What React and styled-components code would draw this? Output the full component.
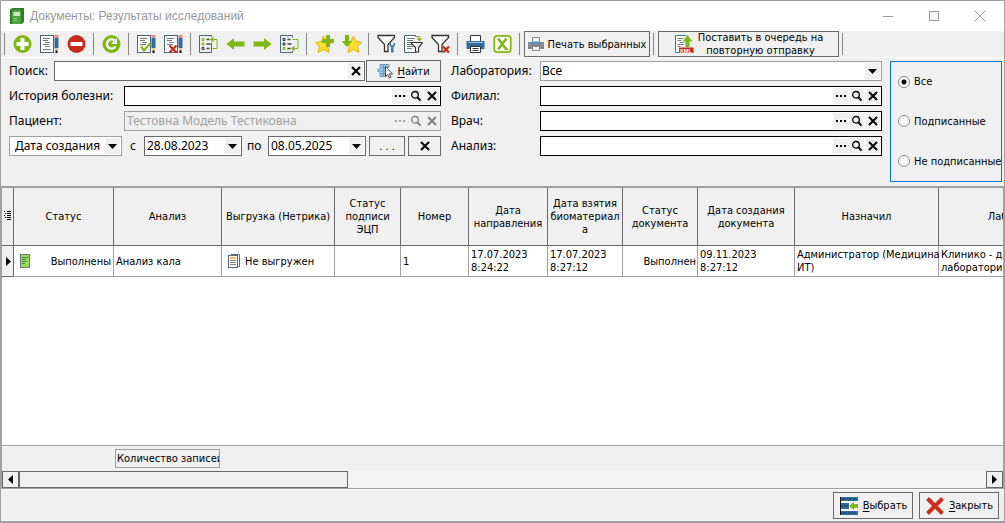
import React from "react";
import styled, { createGlobalStyle, css } from "styled-components";

const GlobalStyle = createGlobalStyle`
  *, *::before, *::after { box-sizing: border-box; }
  body {
    margin: 0;
    background: #f0f0f0;
    color: #000;
    font: 12px/16px "Noto Sans", "Open Sans", sans-serif;
  }
  button, input, select { font: inherit; color: inherit; margin: 0; }
  svg { flex: none; }
`;

const compactText = css`
  font-family: "DejaVu Sans Condensed", "DejaVu Sans", sans-serif;
  font-size: 11px;
  line-height: 13px;
`;

const Window = styled.div`
  display: flex;
  flex-direction: column;
  min-height: 100vh;
  border: 1px solid #a0a0a0;
  border-bottom-width: 2px;
  background: #f0f0f0;
`;

const TitleBar = styled.header`
  display: flex;
  align-items: center;
  height: 30px;
  padding: 0 12px 0 8px;
  background: #fff;
  color: #999;
`;

const Title = styled.h1`
  flex: 1;
  margin: 0 0 0 5px;
  font-family: "Liberation Sans", Arial, sans-serif;
  font-size: 12px;
  font-weight: 400;
`;

const WindowButtons = styled.div`
  display: flex;
  gap: 22px;
`;

const WindowButton = styled.button`
  display: grid;
  place-items: center;
  width: 24px;
  height: 24px;
  padding: 0;
  border: 0;
  background: none;
`;

const Toolbar = styled.div`
  display: flex;
  align-items: center;
  height: 27px;
  border-bottom: 1px solid #fff;
`;

const Separator = styled.i`
  width: 1px;
  height: 22px;
  margin: 0 4px 0 3px;
  background: #868686;
`;

const ToolButton = styled.button`
  display: grid;
  place-items: center;
  width: 27px;
  height: 26px;
  padding: 0;
  border: 0;
  background: none;
`;

const PushButton = styled.button`
  display: flex;
  align-items: center;
  justify-content: center;
  gap: 4px;
  width: ${(p) => p.$width}px;
  height: ${(p) => p.$height || 26}px;
  padding: 0;
  border: 1px solid #696969;
  background: #f0f0f0;
  white-space: nowrap;
  ${compactText}
  u { text-underline-offset: 2px; }
`;

const Filters = styled.form`
  display: flex;
  align-items: flex-start;
  height: 128px;
  padding: 3px 2px 0 8px;
`;

const FilterColumn = styled.div`
  display: flex;
  flex-direction: column;
  gap: 5px;
  flex: ${(p) => (p.$width ? `0 0 ${p.$width}px` : "1")};
  min-width: 0;
  margin-right: ${(p) => p.$after}px;
`;

const FilterRow = styled.div`
  display: flex;
  align-items: center;
  gap: ${(p) => p.$gap || 0}px;
  height: 20px;
`;

const DateActions = styled.div`
  display: flex;
  gap: 3px;
  margin-left: 3px;
`;

const Label = styled.label`
  flex: 0 0 ${(p) => p.$width}px;
  padding-left: ${(p) => p.$indent || 0}px;
`;

const Field = styled.div`
  display: flex;
  align-items: center;
  gap: 1px;
  flex: ${(p) => (p.$width ? `0 0 ${p.$width}px` : "1")};
  min-width: 0;
  height: 20px;
  padding: 1px;
  border: 1px solid ${(p) => p.$border || "#000"};
  background: ${(p) => (p.$off ? "#f0f0f0" : "#fff")};
`;

const TextInput = styled.input`
  flex: 1;
  min-width: 0;
  height: 16px;
  padding: 0 1px;
  border: 0;
  outline: 0;
  background: transparent;
  &:disabled { color: #a0a0a0; }
`;

const FieldButton = styled.button`
  display: grid;
  place-items: center;
  flex: 0 0 15px;
  height: 16px;
  padding: 0;
  border: 0;
  background: #f0f0f0;
`;

const SelectBox = styled.div`
  display: grid;
  flex: ${(p) => (p.$width ? `0 0 ${p.$width}px` : "1")};
  align-items: center;
  height: 20px;
  padding: 1px;
  border: 1px solid #a0a0a0;
  background: #fff;
  > * { grid-area: 1 / 1; }
`;

const Select = styled.select`
  width: 100%;
  height: 16px;
  padding: 0 0 0 ${(p) => p.$indent || 0}px;
  border: 0;
  outline: 0;
  appearance: none;
  background: transparent;
`;

const SelectArrow = styled.span`
  display: grid;
  place-items: center;
  justify-self: end;
  width: 15px;
  height: 16px;
  background: #f0f0f0;
  pointer-events: none;
`;

const RadioGroup = styled.fieldset`
  display: flex;
  flex-direction: column;
  justify-content: space-around;
  flex: 0 0 112px;
  min-width: 0;
  height: 121px;
  margin: 0;
  padding: 0 0 0 7px;
  border: 1px solid #0078d7;
  ${compactText}
`;

const RadioLabel = styled.label`
  display: flex;
  align-items: center;
  gap: 4px;
  white-space: nowrap;
`;

const Radio = styled.input`
  flex: none;
  width: 12px;
  height: 12px;
  border: 1px solid #8a8a8a;
  border-radius: 50%;
  appearance: none;
  background: #fff;
  &:checked { background: radial-gradient(circle, #000 0 2px, #fff 3px); }
`;

const GridPane = styled.section`
  display: flex;
  flex: 1;
  flex-direction: column;
  overflow: hidden;
  border: solid #a0a0a0;
  border-width: 2px 1px 1px;
  background: #fff;
`;

const TableArea = styled.div`
  flex: 1;
  overflow: hidden;
`;

const Table = styled.table`
  width: 1104px;
  table-layout: fixed;
  border-collapse: separate;
  border-spacing: 0;
  ${compactText}
`;

const Th = styled.th`
  height: 58px;
  padding: 0 1px;
  border-right: 1px solid #696969;
  border-bottom: 1px solid #696969;
  background: #f0f0f0;
  font-weight: 400;
  overflow-wrap: anywhere;
`;

const Td = styled.td`
  height: 31px;
  padding: 0 1px 0 2px;
  border-right: 1px solid #a0a0a0;
  border-bottom: 1px solid #a0a0a0;
  white-space: nowrap;
  ${(p) => p.$marker && "padding: 0; background: #f0f0f0; border-color: #696969;"}
`;

const CellContent = styled.div`
  display: flex;
  align-items: center;
  justify-content: ${(p) => (p.$spread ? "space-between" : "flex-start")};
  gap: 4px;
  padding: 0 1px 0 4px;
`;

const Summary = styled.div`
  height: 26px;
  padding: 3px 0 3px 113px;
  border-top: 1px solid #a0a0a0;
  background: #f0f0f0;
`;

const SummaryBox = styled.div`
  width: 105px;
  height: 19px;
  padding: 2px 1px;
  border: 1px solid #a0a0a0;
  overflow: hidden;
  white-space: nowrap;
  ${compactText}
`;

const ScrollTrack = styled.div`
  display: flex;
  height: 17px;
  background: repeating-conic-gradient(#fff 0 25%, #ececec 0 50%) 0 0 / 2px 2px;
`;

const ScrollArrow = styled.button`
  display: grid;
  place-items: center;
  flex: 0 0 17px;
  height: 17px;
  padding: 0;
  border: 1px solid #696969;
  background: #f0f0f0;
`;

const ScrollSpace = styled.div`
  flex: 1;
`;

const ScrollThumb = styled.div`
  width: 34%;
  height: 17px;
  border: 1px solid #696969;
  background: #f0f0f0;
`;

const Footer = styled.footer`
  display: flex;
  justify-content: flex-end;
  gap: 6px;
  height: 32px;
  padding: 2px 5px 0;
  border-top: 1px solid #fff;
`;

/* ---------- icons ---------- */

const Svg = ({ s = 20, w, h, children }) => (
  <svg width={w || s} height={h || s} viewBox={`0 0 ${w || s} ${h || s}`} fill="none" aria-hidden="true">
    {children}
  </svg>
);

const GREEN = "#7fb814";
const SLATE = "#4b6577";
const RED = "#c42b1c";

const AddIcon = () => (
  <Svg>
    <circle cx="9.5" cy="10" r="9" fill={GREEN} />
    <path d="M9.500 4v12M3.500 10h12" stroke="#fff" strokeWidth="4" />
  </Svg>
);
const RemoveIcon = () => (
  <Svg>
    <circle cx="9.5" cy="10" r="9" fill={RED} />
    <path d="M3.500 10h12" stroke="#fff" strokeWidth="4" />
  </Svg>
);
const RefreshIcon = () => (
  <Svg>
    <circle cx="9.5" cy="10" r="9" fill={GREEN} />
    <path d="M13.300 12.600A4.600 4.600 0 1 1 12.400 6.400" stroke="#fff" strokeWidth="2.300" />
    <path d="M15 4v6H9z" fill="#fff" />
  </Svg>
);
const EditIcon = ({ mark }) => (
  <Svg>
    <rect x="0.500" y="1.500" width="13" height="17" fill="#fff" stroke={SLATE} />
    <path d="M3 4.500h7M3 6.500h5M5 8.500h5M3 10.500h6" stroke="#777" />
    {!mark && <path d="M5 12.500h5M3 15.500h8" stroke="#777" />}
    <path d="M14.500 1h4v3h-4z" fill="#e38b83" />
    <path d="M14.500 4h4v10h-4z" fill="#2f6d9f" />
    <path d="M14.500 14h4l-1 3h-2z" fill="#e9c79b" />
    <path d="M15.500 16.500h2V19h-2z" fill="#000" />
    {mark === "check" && <path d="M4 12.500l3 4 6-7" stroke={GREEN} strokeWidth="2.200" />}
    {mark === "cross" && <path d="M5.500 11.500l7 7M12.500 11.500l-7 7" stroke={RED} strokeWidth="2.200" />}
  </Svg>
);
const ListIcon = ({ down }) => (
  <Svg>
    <path d={down ? "M12.500 3.500v-2h-12v17h12v-1.500" : "M12.500 3V1.500h-12v17h12V8.500"} stroke={SLATE} />
    <path d="M3 4.500h2v2H3zM3 9h2v2H3z" stroke={down ? "#333" : GREEN} />
    <path d="M3 13.500h2v2H3z" stroke={down ? GREEN : "#333"} />
    <path d="M7.500 5.500h3M7.500 10h4M7.500 14.500h3" stroke="#444" strokeWidth="1.400" />
    {down ? (
      <>
        <path d="M12.500 5.500h5.500v9h-4" stroke={GREEN} />
        <path d="M11 14.500l3.500-3v6z" fill={GREEN} />
      </>
    ) : (
      <>
        <path d="M13.500 14.500h4.500v-9h-4" stroke={GREEN} />
        <path d="M11 5.500l3.500-3v6z" fill={GREEN} />
      </>
    )}
  </Svg>
);
const ArrowLeftIcon = () => (
  <Svg><path d="M.5 10L8 4v3.500h10.500v5H8V16z" fill={GREEN} /></Svg>
);
const ArrowRightIcon = () => (
  <Svg><path d="M18.500 10L11 4v3.500H.5v5H11V16z" fill={GREEN} /></Svg>
);
const StarIcon = ({ plus }) => (
  <Svg>
    <path
      d={plus ? "M8.500 2l2.500 5.500 6 .8-4.300 4.200 1.300 6-5.500-3-5.300 3 1.200-6L1 8.500l5.500-1z" : "M11.500 2l2.500 5.500 5.500.8-4 4.200 1.300 6-5.300-3-5.500 3 1.300-6L3 8.500l6-1z"}
      fill="#ffe02e"
      stroke="#dfb30c"
    />
    {plus ? (
      <path d="M11 1h4v4h4v4h-4v4h-4V9H7V5h4z" fill={GREEN} />
    ) : (
      <path d="M3 1h4v6h3.500L5 13-.5 7H3z" fill={GREEN} />
    )}
  </Svg>
);
const FUNNEL = "M1 1.500h16.500v2l-6.500 7v7H7.500v-7L1 3.500z";
const FilterSetupIcon = () => (
  <Svg>
    <path d={FUNNEL} fill="#fff" stroke="#333" strokeWidth="1.300" />
    <path d="M12.500 9v2.500l1.500 1.500v5.500h2.500V13l1.500-1.500V9h-1.500v2.300H14V9z" fill="#3a78a8" />
  </Svg>
);
const FilterDropIcon = () => (
  <Svg>
    <path d={FUNNEL} fill="#fff" stroke="#333" strokeWidth="1.300" />
    <path d="M12 12.500l6 6M18 12.500l-6 6" stroke={RED} strokeWidth="2.200" />
  </Svg>
);
const FilterDocIcon = () => (
  <Svg>
    <path d="M12 1.500H.5v17h12" fill="#fff" stroke={SLATE} />
    <path d="M3 4.500h8M3 6.500h6M3 8.500h5M3 10.500h5M3 12.500h6M3 14.500h5" stroke="#777" />
    <path d="M11 2.500h4.500V5" stroke={GREEN} />
    <path d="M12.500 4.500h6l-3 3z" fill={GREEN} />
    <path d="M7.500 8.500h10.500v1l-3.500 4v4.500h-3v-4.500l-4-4z" fill="#fff" stroke="#333" strokeWidth="1.200" />
  </Svg>
);
const PrinterIcon = () => (
  <Svg>
    <path d="M4.500 1.500h10v6h-10z" fill="#fff" stroke="#333" />
    <path d="M.5 7h18v8H.5z" fill="#2f6d9f" />
    <path d="M2 8.500h15" stroke="#fff" strokeWidth=".6" />
    <path d="M4.500 12.500h10v6h-10z" fill="#fff" stroke="#333" />
    <path d="M6.500 14.500h6M6.500 16.500h6" stroke="#333" />
  </Svg>
);
const ExcelIcon = () => (
  <Svg>
    <rect x="1.300" y="1.800" width="16.400" height="16.400" rx="3" fill="#fff" stroke={GREEN} strokeWidth="1.800" />
    <path d="M5 4.500l8.500 11M13.500 4.500L5 15.500" stroke={GREEN} strokeWidth="2.600" />
    <path d="M12.500 15.500H15" stroke={GREEN} strokeWidth="1.500" />
  </Svg>
);
const GrayPrinterIcon = () => (
  <Svg w={16} h={16}>
    <path d="M4.500 1.500h7v5h-7z" fill="#fff" stroke="#888" />
    <path d="M0 6h16v7H0z" fill="#858b90" />
    <path d="M4 6.500h8" stroke="#3f8fd6" strokeWidth="2" />
    <path d="M4.500 10.500h7v4h-7z" fill="#fff" stroke="#888" />
  </Svg>
);
const XmlText = styled.text`
  font: 700 6px "Liberation Sans", sans-serif;
`;
const XmlIcon = () => (
  <Svg>
    <path d="M12 1.500H1.500v17h4" fill="#fff" stroke="#3a78a8" />
    <path d="M3.500 4.500h6M3.500 6.500h4M5.500 8.500h4M3.500 10.500h6M3.500 12.500h3" stroke="#777" />
    <path d="M11.500 13V7.500H8.500l5-6.500 5 6.500h-3V13z" fill={GREEN} />
    <path d="M5 13.500h14.500V19H5z" fill={RED} />
    <XmlText x="5.500" y="18.500" fill="#fff">XML</XmlText>
  </Svg>
);
const BookIcon = () => (
  <Svg w={16} h={18}>
    <path d="M1 2.500L3.500 1H15v14l-2.500 2H1z" fill="#2f7d2c" />
    <path d="M1.500 3H12v14H1.500z" fill="#4fa43f" />
    <path d="M1 3h2v14H1z" fill="#2e7a2b" />
    <path d="M4.500 5H11v4H4.500z" fill="#c9eab9" />
    <path d="M4.500 11.500H8M4.500 13.500H8" stroke="#8fd07a" />
  </Svg>
);
const FindIcon = () => (
  <Svg w={16} h={16}>
    <path d="M3 1.500h9v3H3zM1 6h9v3H1zM3 10.500h6v3H3z" fill="#9cc3dc" stroke="#6f9bb8" />
    <path d="M6.500 1v13" stroke="#6f9bb8" />
    <path d="M8.500 3.500v10l2.300-2 1.500 3.500 1.700-.8-1.500-3.300h3z" fill="#fff" stroke="#333" strokeWidth=".9" />
  </Svg>
);
const CrossIcon = ({ color = "#000" }) => (
  <Svg s={12}><path d="M2 2l8 8M10 2l-8 8" stroke={color} strokeWidth="2" /></Svg>
);
const DotsIcon = ({ color = "#000" }) => (
  <Svg s={12}><path d="M1 5h2v2H1zM5 5h2v2H5zM9 5h2v2H9z" fill={color} /></Svg>
);
const LensIcon = ({ color = "#000" }) => (
  <Svg s={12}>
    <circle cx="5" cy="4.800" r="3.300" stroke={color} strokeWidth="1.300" />
    <path d="M7.300 7.200l3.200 3.500" stroke={color} strokeWidth="2" />
  </Svg>
);
const DownIcon = () => (
  <Svg w={9} h={5}><path d="M0 0h9L4.500 5z" fill="#000" /></Svg>
);
const LeftTriangle = () => (
  <Svg w={5} h={9}><path d="M5 0v9L0 4.500z" fill="#000" /></Svg>
);
const RightTriangle = () => (
  <Svg w={5} h={9}><path d="M0 0v9l5-4.500z" fill="#000" /></Svg>
);
const ColumnsIcon = () => (
  <Svg w={8} h={10}>
    <path d="M0 1.500h1M0 5.500h1M1 3.500h1M1 7.500h1M3 1.500h4M3 3.500h4M3 5.500h4M3 7.500h4M3 9.500h4" stroke="#000" />
  </Svg>
);
const DoneDocIcon = () => (
  <Svg w={11} h={16}>
    <rect x=".5" y="1.500" width="9" height="13" fill="#98dc55" stroke="#6b7480" />
    <path d="M2 4.500h6M2 6.500h4M2 8.500h5M2 10.500h3" stroke="#4f8a3c" />
  </Svg>
);
const PendingDocIcon = () => (
  <Svg w={13} h={16}>
    <path d="M3 1.500h8.500v12H10" stroke="#5c6b7a" />
    <rect x=".5" y="2.500" width="9" height="12" fill="#fff" stroke="#5c6b7a" />
    <path d="M2 5h6" stroke="#f5b862" strokeWidth="2" />
    <path d="M2 7.500h6M2 9.500h6M2 11.500h6" stroke="#7a8794" />
  </Svg>
);
const ChooseIcon = () => (
  <Svg>
    <path d="M1 1h18v4H1zM1 15h18v4H1z" fill="#2f6d9f" />
    <path d="M2 3h15M2 17h15" stroke="#1d3f5c" strokeDasharray="5 1" />
    <path d="M1 5h18v10H1z" fill="#fff" />
    <path d="M2 7h8v6H2z" fill="#2f6d9f" />
    <path d="M1.500 1v18" stroke="#111" />
    <path d="M3 10h6" stroke="#1d3f5c" />
    <path d="M10 10l5-4.500V8h4v4h-4v2.500z" fill={GREEN} />
  </Svg>
);
const CloseIcon = () => (
  <Svg><path d="M2.500 2.500l15 15M17.500 2.500l-15 15" stroke="#cb2d18" strokeWidth="4" /></Svg>
);

/* ---------- composed parts ---------- */

const tools = [
  [["Добавить", <AddIcon />], ["Изменить", <EditIcon />], ["Удалить", <RemoveIcon />]],
  [["Обновить", <RefreshIcon />]],
  [["Подписать", <EditIcon mark="check" />], ["Снять подпись", <EditIcon mark="cross" />]],
  [["В начало", <ListIcon />], ["Назад", <ArrowLeftIcon />], ["Вперёд", <ArrowRightIcon />], ["В конец", <ListIcon down />]],
  [["В избранное", <StarIcon plus />], ["Из избранного", <StarIcon />]],
  [["Настройка фильтра", <FilterSetupIcon />], ["Фильтры", <FilterDocIcon />], ["Сбросить фильтр", <FilterDropIcon />]],
  [["Печать", <PrinterIcon />], ["Экспорт", <ExcelIcon />]],
];

function LookupField({ id, value = "", disabled }) {
  const color = disabled ? "#808080" : "#000";
  return (
    <Field $border={disabled ? "#a0a0a0" : "#000"} $off={disabled}>
      <TextInput id={id} defaultValue={value} disabled={disabled} />
      <FieldButton type="button" aria-label="Список" disabled={disabled}><DotsIcon color={disabled ? "#a0a0a0" : color} /></FieldButton>
      <FieldButton type="button" aria-label="Просмотр" disabled={disabled}><LensIcon color={color} /></FieldButton>
      <FieldButton type="button" aria-label="Очистить" disabled={disabled}><CrossIcon color={color} /></FieldButton>
    </Field>
  );
}

function DateField({ id, value }) {
  return (
    <Field $width={98} $border="#696969">
      <TextInput id={id} defaultValue={value} />
      <FieldButton type="button" aria-label="Календарь"><DownIcon /></FieldButton>
    </Field>
  );
}

const columns = [
  ["Статус", 100],
  ["Анализ", 108],
  ["Выгрузка (Нетрика)", 113],
  ["Статус подписи ЭЦП", 66],
  ["Номер", 68],
  ["Дата направления", 79],
  ["Дата взятия биоматериала", 75],
  ["Статус документа", 75],
  ["Дата создания документа", 97],
  ["Назначил", 144],
  ["Лаборатория", 167],
];

export default function App() {
  return (
    <>
      <GlobalStyle />
      <Window>
        <TitleBar>
          <BookIcon />
          <Title>Документы: Результаты исследований</Title>
          <WindowButtons>
            <WindowButton aria-label="Свернуть"><Svg s={12}><path d="M1 6.500h10" stroke="#999" /></Svg></WindowButton>
            <WindowButton aria-label="Развернуть"><Svg s={12}><path d="M1.500 1.500h9v9h-9z" stroke="#999" /></Svg></WindowButton>
            <WindowButton aria-label="Закрыть окно"><Svg s={12}><path d="M1 1l10 10M11 1L1 11" stroke="#999" /></Svg></WindowButton>
          </WindowButtons>
        </TitleBar>

        <Toolbar role="toolbar">
          {tools.map((group, i) => (
            <React.Fragment key={i}>
              <Separator />
              {group.map(([name, icon]) => (
                <ToolButton key={name} aria-label={name}>{icon}</ToolButton>
              ))}
            </React.Fragment>
          ))}
          <Separator />
          <PushButton $width={126}><GrayPrinterIcon />Печать выбранных</PushButton>
          <Separator />
          <PushButton $width={181}>
            <XmlIcon />
            <span>Поставить в очередь на<br />повторную отправку</span>
          </PushButton>
          <Separator />
        </Toolbar>

        <Filters onSubmit={(e) => e.preventDefault()}>
          <FilterColumn $width={432} $after={10}>
            <FilterRow $gap={1}>
              <Label htmlFor="search" $width={44}>Поиск:</Label>
              <Field $border="#696969">
                <TextInput id="search" />
                <FieldButton type="button" aria-label="Очистить"><CrossIcon /></FieldButton>
              </Field>
              <PushButton $width={75} $height={22}><FindIcon /><span><u>Н</u>айти</span></PushButton>
            </FilterRow>
            <FilterRow>
              <Label htmlFor="history" $width={115}>История болезни:</Label>
              <LookupField id="history" />
            </FilterRow>
            <FilterRow>
              <Label htmlFor="patient" $width={115}>Пациент:</Label>
              <LookupField id="patient" value="Тестовна Модель Тестиковна" disabled />
            </FilterRow>
            <FilterRow>
              <SelectBox $width={113}>
                <Select aria-label="Вид даты" $indent={4}><option>Дата создания</option></Select>
                <SelectArrow><DownIcon /></SelectArrow>
              </SelectBox>
              <Label htmlFor="from" $width={22} $indent={8}>с</Label>
              <DateField id="from" value="28.08.2023" />
              <Label htmlFor="to" $width={26} $indent={5}>по</Label>
              <DateField id="to" value="08.05.2025" />
              <DateActions>
                <PushButton type="button" $width={36} $height={20}>. . .</PushButton>
                <PushButton type="button" aria-label="Очистить даты" $width={33} $height={20}><CrossIcon /></PushButton>
              </DateActions>
            </FilterRow>
          </FilterColumn>

          <FilterColumn $after={8}>
            <FilterRow>
              <Label htmlFor="lab" $width={89}>Лаборатория:</Label>
              <SelectBox>
                <Select id="lab"><option>Все</option></Select>
                <SelectArrow><DownIcon /></SelectArrow>
              </SelectBox>
            </FilterRow>
            <FilterRow>
              <Label htmlFor="branch" $width={89}>Филиал:</Label>
              <LookupField id="branch" />
            </FilterRow>
            <FilterRow>
              <Label htmlFor="doctor" $width={89}>Врач:</Label>
              <LookupField id="doctor" />
            </FilterRow>
            <FilterRow>
              <Label htmlFor="analysis" $width={89}>Анализ:</Label>
              <LookupField id="analysis" />
            </FilterRow>
          </FilterColumn>

          <RadioGroup aria-label="Подпись">
            <RadioLabel><Radio type="radio" name="signed" defaultChecked />Все</RadioLabel>
            <RadioLabel><Radio type="radio" name="signed" />Подписанные</RadioLabel>
            <RadioLabel><Radio type="radio" name="signed" />Не подписанные</RadioLabel>
          </RadioGroup>
        </Filters>

        <GridPane>
          <TableArea>
            <Table>
              <colgroup>
                <col width={12} />
                {columns.map(([name, width]) => <col key={name} width={width} />)}
              </colgroup>
              <thead>
                <tr>
                  <Th aria-label="Столбцы"><ColumnsIcon /></Th>
                  {columns.map(([name]) => <Th key={name}>{name}</Th>)}
                </tr>
              </thead>
              <tbody>
                <tr>
                  <Td $marker><CellContent><RightTriangle /></CellContent></Td>
                  <Td><CellContent $spread><DoneDocIcon />Выполнены</CellContent></Td>
                  <Td>Анализ кала</Td>
                  <Td><CellContent><PendingDocIcon />Не выгружен</CellContent></Td>
                  <Td />
                  <Td>1</Td>
                  <Td>17.07.2023<br />8:24:22</Td>
                  <Td>17.07.2023<br />8:27:12</Td>
                  <Td align="right">Выполнен</Td>
                  <Td>09.11.2023<br />8:27:12</Td>
                  <Td>Администратор (Медицина<br />ИТ)</Td>
                  <Td>Клинико - диагностическая<br />лаборатория</Td>
                </tr>
              </tbody>
            </Table>
          </TableArea>
          <Summary><SummaryBox>Количество записей</SummaryBox></Summary>
          <ScrollTrack>
            <ScrollArrow aria-label="Влево"><LeftTriangle /></ScrollArrow>
            <ScrollSpace><ScrollThumb /></ScrollSpace>
            <ScrollArrow aria-label="Вправо"><RightTriangle /></ScrollArrow>
          </ScrollTrack>
        </GridPane>

        <Footer>
          <PushButton $width={80} $height={27}><ChooseIcon /><span><u>В</u>ыбрать</span></PushButton>
          <PushButton $width={80} $height={27}><CloseIcon /><span><u>З</u>акрыть</span></PushButton>
        </Footer>
      </Window>
    </>
  );
}
